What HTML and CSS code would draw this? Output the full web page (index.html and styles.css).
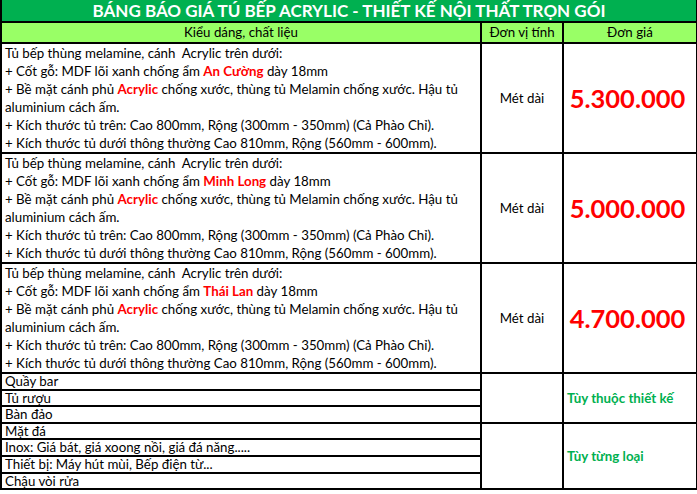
FILE: index.html
```html
<!DOCTYPE html>
<html lang="vi">
<head>
<meta charset="utf-8">
<title>Báng báo giá tủ bếp Acrylic</title>
<link rel="stylesheet" href="styles.css">
</head>
<body>
<table class="sheet">
  <colgroup><col class="c1"><col class="c2"><col class="c3"></colgroup>
  <tr class="title-row"><td colspan="3" class="title">BÁNG BÁO GIÁ TÚ BẾP ACRYLIC - THIẾT KẾ NỘI THẤT TRỌN GÓI</td></tr>
  <tr class="head"><td>Kiểu dáng, chất liệu</td><td>Đơn vị tính</td><td>Đơn giá</td></tr>
  <tr class="item">
    <td class="desc">
      <div>Tủ bếp thùng melamine, cánh&nbsp; Acrylic trên dưới:</div>
      <div>+ Cốt gỗ: MDF lõi xanh chống ẩm <span class="hl">An Cường</span> dày 18mm</div>
      <div>+ Bề mặt cánh phủ <span class="hl">Acrylic</span> chống xước, thùng tủ Melamin chống xước. Hậu tủ</div>
      <div>aluminium cách ấm.</div>
      <div>+ Kích thước tủ trên: Cao 800mm, Rộng (300mm - 350mm) (Cả Phào Chỉ).</div>
      <div>+ Kích thước tủ dưới thông thường Cao 810mm, Rộng (560mm - 600mm).</div>
    </td>
    <td class="unit">Mét dài</td>
    <td class="price">5.300.000</td>
  </tr>
  <tr class="item">
    <td class="desc">
      <div>Tủ bếp thùng melamine, cánh&nbsp; Acrylic trên dưới:</div>
      <div>+ Cốt gỗ: MDF lõi xanh chống ẩm <span class="hl">Minh Long</span> dày 18mm</div>
      <div>+ Bề mặt cánh phủ <span class="hl">Acrylic</span> chống xước, thùng tủ Melamin chống xước. Hậu tủ</div>
      <div>aluminium cách ấm.</div>
      <div>+ Kích thước tủ trên: Cao 800mm, Rộng (300mm - 350mm) (Cả Phào Chỉ).</div>
      <div>+ Kích thước tủ dưới thông thường Cao 810mm, Rộng (560mm - 600mm).</div>
    </td>
    <td class="unit">Mét dài</td>
    <td class="price">5.000.000</td>
  </tr>
  <tr class="item">
    <td class="desc">
      <div>Tủ bếp thùng melamine, cánh&nbsp; Acrylic trên dưới:</div>
      <div>+ Cốt gỗ: MDF lõi xanh chống ẩm <span class="hl">Thái Lan</span> dày 18mm</div>
      <div>+ Bề mặt cánh phủ <span class="hl">Acrylic</span> chống xước, thùng tủ Melamin chống xước. Hậu tủ</div>
      <div>aluminium cách ấm.</div>
      <div>+ Kích thước tủ trên: Cao 800mm, Rộng (300mm - 350mm) (Cả Phào Chỉ).</div>
      <div>+ Kích thước tủ dưới thông thường Cao 810mm, Rộng (560mm - 600mm).</div>
    </td>
    <td class="unit">Mét dài</td>
    <td class="price">4.700.000</td>
  </tr>
  <tr class="sub"><td>Quầy bar</td><td rowspan="3"></td><td rowspan="3" class="note">Tùy thuộc thiết kế</td></tr>
  <tr class="sub"><td>Tủ rượu</td></tr>
  <tr class="sub"><td>Bàn đảo</td></tr>
  <tr class="sub"><td>Mặt đá</td><td rowspan="4"></td><td rowspan="4" class="note">Tùy từng loại</td></tr>
  <tr class="sub"><td>Inox: Giá bát, giá xoong nồi, giá đá năng.....</td></tr>
  <tr class="sub"><td>Thiết bị: Máy hút mùi, Bếp điện từ...</td></tr>
  <tr class="sub"><td>Chậu vòi rửa</td></tr>
</table>
</body>
</html>
```

FILE: styles.css
```css
html, body {
  margin: 0;
  padding: 0;
  background: #fff;
}
.sheet {
  border-collapse: collapse;
  table-layout: fixed;
  width: 696px;
  font-family: Lato, "Noto Sans", sans-serif;
  font-size: 13.3px;
  color: #000;
}
.c1 { width: 480px; }
.c2 { width: 82px; }
.c3 { width: 134px; }
.sheet td {
  border: 2px solid #000;
  padding: 0 3px;
  white-space: nowrap;
  overflow: hidden;
}
.title-row td {
  border-top: 0;
}
.title {
  background: #00b050;
  color: #fff;
  font-weight: 700;
  font-size: 17px;
  text-align: center;
  height: 21px;
  line-height: 21px;
}
.head td {
  background: #99ff66;
  text-align: center;
  height: 19px;
  line-height: 19px;
}
.item td {
  height: 108px;
}
.desc {
  vertical-align: top;
  line-height: 18px;
}
.hl {
  color: #ff0000;
  font-weight: 700;
}
.unit {
  text-align: center;
  vertical-align: middle;
}
.sheet .price {
  color: #ff0000;
  font-weight: 700;
  font-size: 25.5px;
  text-align: center;
  vertical-align: middle;
  padding: 0 5px 0 0;
}
.sub td {
  height: 14.6px;
  line-height: 14.6px;
}
.note {
  color: #00b050;
  font-weight: 700;
  vertical-align: middle;
}
```
